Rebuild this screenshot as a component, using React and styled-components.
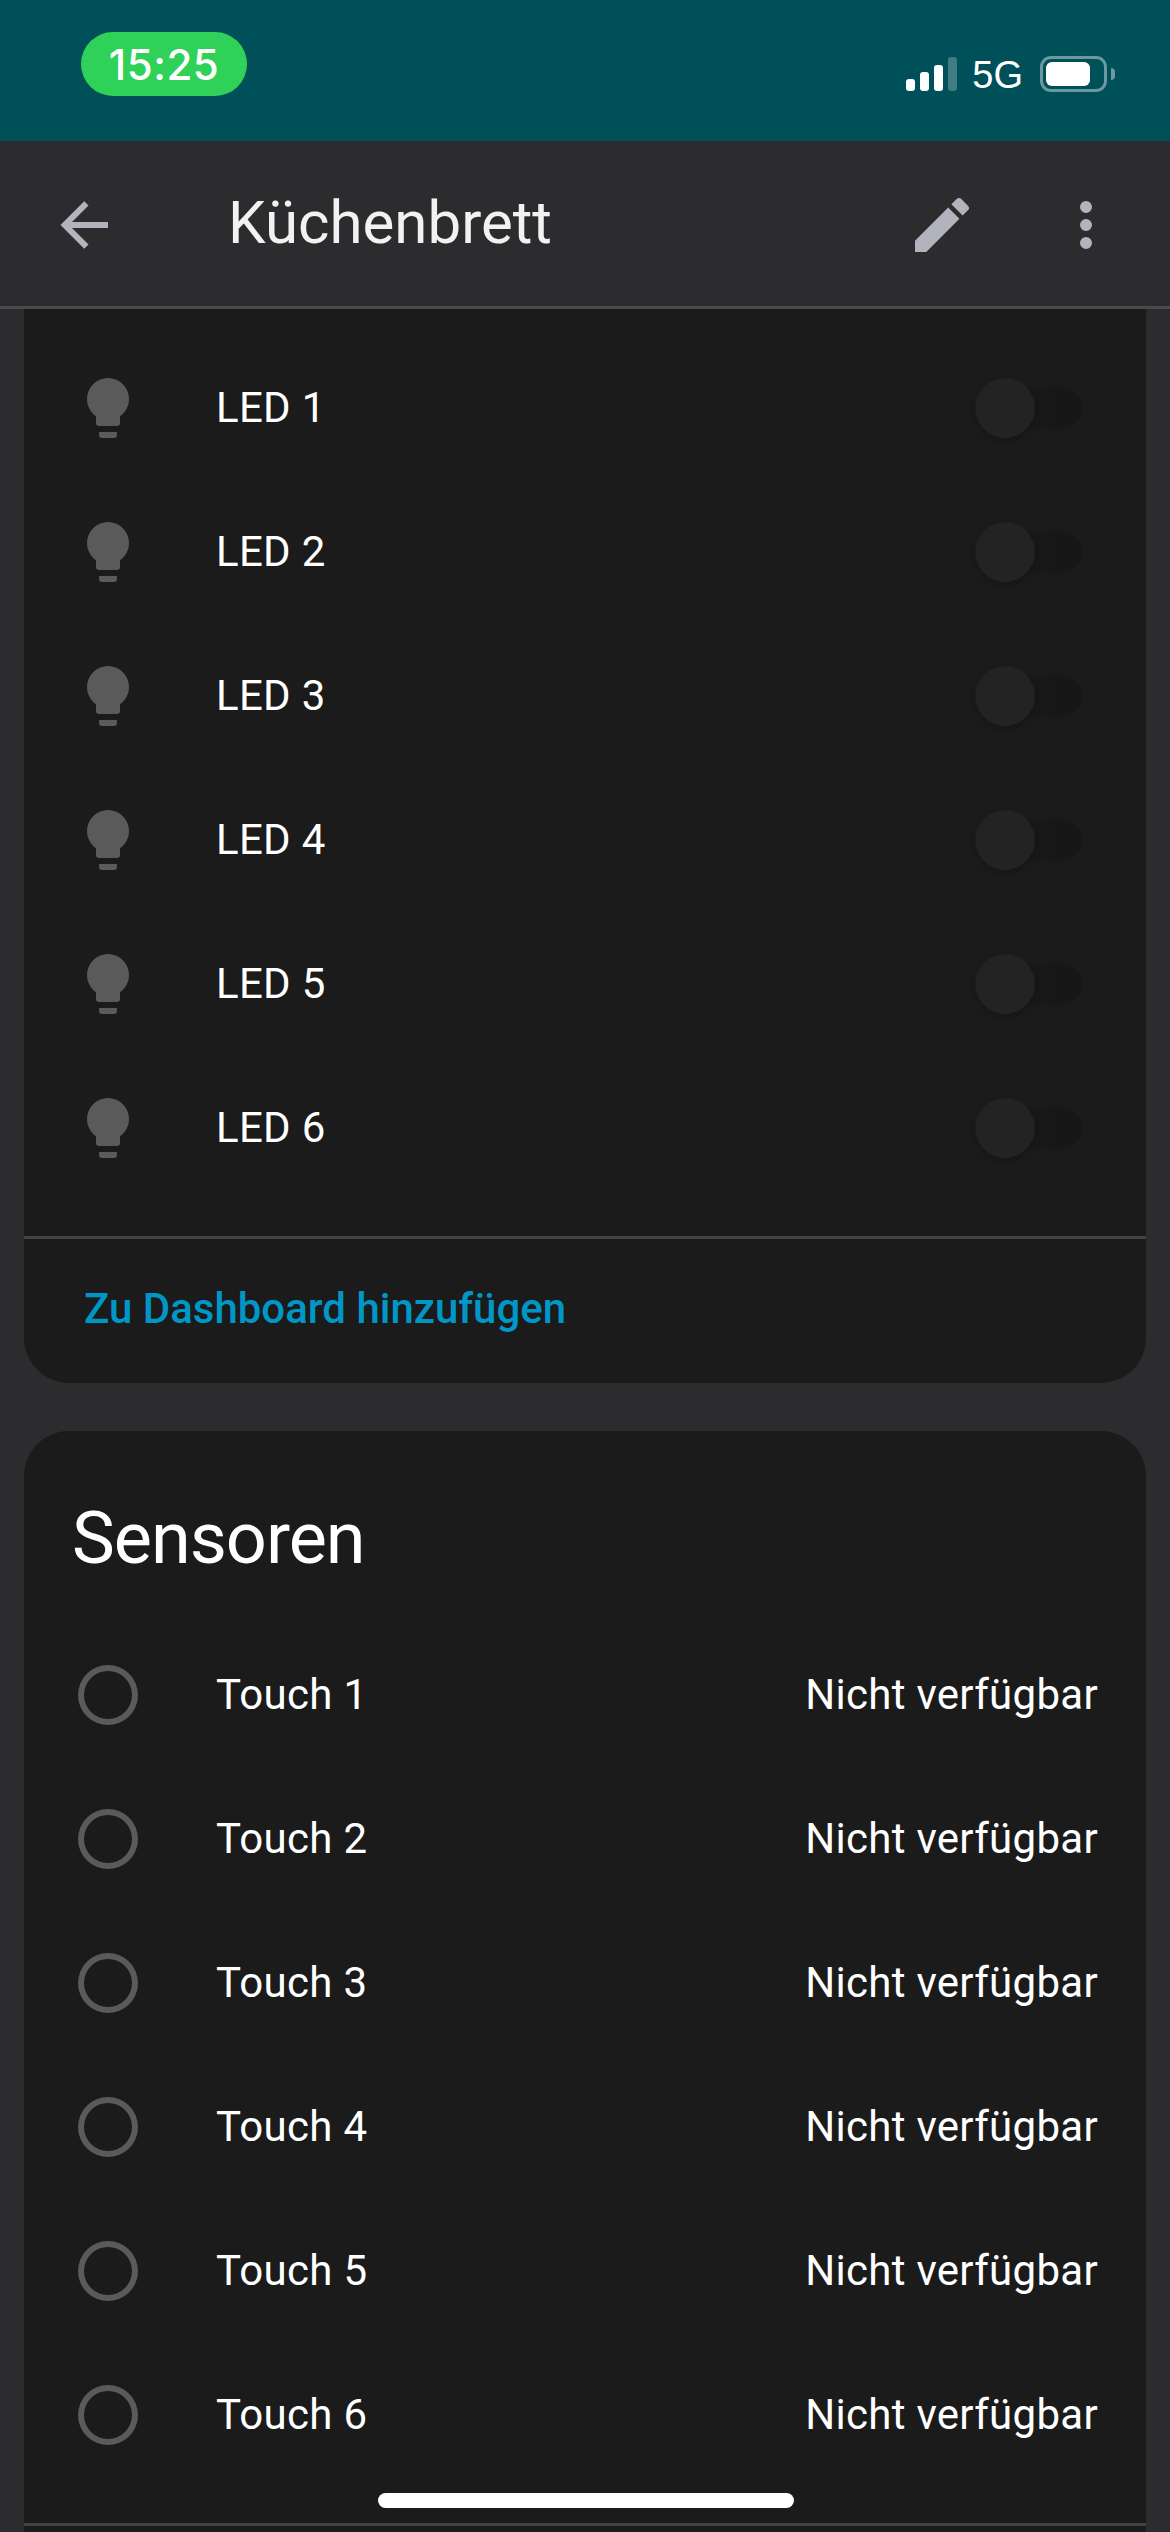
import React from 'react';
import styled, { createGlobalStyle } from 'styled-components';

const GlobalStyle = createGlobalStyle`
    html, body {
        margin: 0;
        padding: 0;
        background: #2c2c2e;
    }
`;

const Page = styled.div`
    position: relative;
    display: flex;
    flex-direction: column;
    width: 1170px;
    height: 2532px;
    overflow: hidden;
    background: #2c2c2e;
    font-family: Roboto, "Liberation Sans", sans-serif;
    color: #fff;
`;

const StatusBar = styled.div`
    display: flex;
    justify-content: space-between;
    align-items: flex-start;
    flex: none;
    box-sizing: border-box;
    height: 141px;
    padding: 32px 63px 0 81px;
    background: #00505a;
`;

const TimePill = styled.div`
    display: flex;
    align-items: center;
    justify-content: center;
    width: 166px;
    height: 64px;
    border-radius: 32px;
    background: #30d158;
    font-family: Inter, "Liberation Sans", sans-serif;
    font-size: 42px;
    font-weight: 500;
    letter-spacing: 0.5px;
`;

const StatusIcons = styled.div`
    display: flex;
    align-items: center;
    height: 36px;
    margin-top: 24px;
`;

const Signal = styled.div`
    display: flex;
    align-items: flex-end;
    gap: 5px;
    height: 34px;
`;

const SignalBar = styled.div`
    width: 9px;
    height: ${props => props.$h}px;
    border-radius: 3px;
    background: ${props => (props.$off ? 'rgba(255, 255, 255, 0.25)' : '#fff')};
`;

const Network = styled.div`
    margin: 2px 17px 0 15px;
    font-family: "Liberation Sans", sans-serif;
    font-size: 38px;
    line-height: 36px;
`;

const Battery = styled.div`
    position: relative;
    box-sizing: border-box;
    width: 67px;
    height: 36px;
    padding: 3px;
    border: 3px solid rgba(255, 255, 255, 0.42);
    border-radius: 11px;

    &::after {
        content: '';
        position: absolute;
        top: 9px;
        right: -11px;
        width: 4px;
        height: 12px;
        border-radius: 0 6px 6px 0;
        background: rgba(255, 255, 255, 0.42);
    }
`;

const BatteryFill = styled.div`
    width: 44px;
    height: 24px;
    border-radius: 6px;
    background: #fff;
`;

const Header = styled.header`
    display: flex;
    align-items: center;
    flex: none;
    box-sizing: border-box;
    height: 168px;
    padding: 3px 48px 0;
    border-bottom: 3px solid #4a4a4c;
    background: #2c2c2e;
`;

const HeaderButton = styled.div`
    display: flex;
    flex: none;
    width: 72px;
    height: 72px;
    margin-left: ${props => props.$gap || 0}px;
`;

const Title = styled.h1`
    flex: 1;
    margin: 0 0 5px 108px;
    font-size: 60px;
    font-weight: 400;
    color: #f2f2f2;
`;

const Icon = styled.svg`
    display: block;
    width: 72px;
    height: 72px;
    fill: ${props => props.$color};
`;

const Content = styled.main`
    display: flex;
    flex-direction: column;
    flex: 1;
    gap: 48px;
    padding: 0 24px;
`;

const Card = styled.section`
    flex: ${props => (props.$grow ? 1 : 'none')};
    padding-top: ${props => (props.$scrolled ? 27 : 0)}px;
    background: #1b1b1b;
    border-radius: ${props => (props.$scrolled ? '0 0 45px 45px' : '45px 45px 0 0')};
`;

const CardTitle = styled.h2`
    height: 92px;
    margin: 0;
    padding: 62px 48px 38px;
    font-size: 72px;
    font-weight: 400;
    line-height: 92px;
    letter-spacing: -1px;
`;

const RowList = styled.div`
    display: flex;
    flex-direction: column;
    padding-bottom: 36px;
    border-bottom: 3px solid #424242;
`;

const Row = styled.div`
    display: flex;
    align-items: center;
    height: 144px;
    padding: 0 48px;
`;

const RowName = styled.div`
    flex: 1;
    margin: 0 0 2px 72px;
    font-size: 42px;
    letter-spacing: 0.3px;
`;

const RowState = styled.div`
    margin-bottom: 2px;
    font-size: 42px;
    letter-spacing: 0.3px;
`;

const Toggle = styled.div`
    position: relative;
    width: 102px;
    height: 42px;
    margin-right: 15px;
    border-radius: 21px;
    background: linear-gradient(90deg, #181818 0 68%, #171717 68% 100%);
`;

const ToggleThumb = styled.div`
    position: absolute;
    top: -9px;
    left: -6px;
    width: 60px;
    height: 60px;
    border-radius: 50%;
    background: #232323;
    box-shadow: 0 3px 6px rgba(0, 0, 0, 0.2);
`;

const CardLink = styled.div`
    height: 144px;
    padding-left: 60px;
    font-size: 42px;
    font-weight: 500;
    line-height: 140px;
    color: #0097c7;
`;

const HomeBar = styled.div`
    position: absolute;
    left: 378px;
    top: 2493px;
    width: 416px;
    height: 15px;
    border-radius: 8px;
    background: #fff;
`;

const ICONS = {
    back: 'M20,11V13H8L13.5,18.5L12.08,19.92L4.16,12L12.08,4.08L13.5,5.5L8,11H20Z',
    pencil: 'M20.71,7.04C21.1,6.65 21.1,6 20.71,5.63L18.37,3.29C18,2.9 17.35,2.9 16.96,3.29L15.12,5.12L18.87,8.87M3,17.25V21H6.75L17.81,9.93L14.06,6.18L3,17.25Z',
    dots: 'M12,16A2,2 0 0,1 14,18A2,2 0 0,1 12,20A2,2 0 0,1 10,18A2,2 0 0,1 12,16M12,10A2,2 0 0,1 14,12A2,2 0 0,1 12,14A2,2 0 0,1 10,12A2,2 0 0,1 12,10M12,4A2,2 0 0,1 14,6A2,2 0 0,1 12,8A2,2 0 0,1 10,6A2,2 0 0,1 12,4Z',
    bulb: 'M12,2A7,7 0 0,0 5,9C5,11.38 6.19,13.47 8,14.74V17A1,1 0 0,0 9,18H15A1,1 0 0,0 16,17V14.74C17.81,13.47 19,11.38 19,9A7,7 0 0,0 12,2M9,21A1,1 0 0,0 10,22H14A1,1 0 0,0 15,21V20H9V21Z',
    circle: 'M12,20A8,8 0 0,1 4,12A8,8 0 0,1 12,4A8,8 0 0,1 20,12A8,8 0 0,1 12,20M12,2A10,10 0 0,0 2,12A10,10 0 0,0 12,22A10,10 0 0,0 22,12A10,10 0 0,0 12,2Z'
};

const MdiIcon = ({ name, color }) => (
    <Icon viewBox="0 0 24 24" $color={color}>
        <path d={ICONS[name]} />
    </Icon>
);

const NUMBERS = [1, 2, 3, 4, 5, 6];

export default function App() {
    return (
        <Page>
            <GlobalStyle />
            <StatusBar>
                <TimePill>15:25</TimePill>
                <StatusIcons>
                    <Signal>
                        <SignalBar $h={12} />
                        <SignalBar $h={19} />
                        <SignalBar $h={26} />
                        <SignalBar $h={34} $off />
                    </Signal>
                    <Network>5G</Network>
                    <Battery>
                        <BatteryFill />
                    </Battery>
                </StatusIcons>
            </StatusBar>
            <Header>
                <HeaderButton>
                    <MdiIcon name="back" color="#b3b3bd" />
                </HeaderButton>
                <Title>Küchenbrett</Title>
                <HeaderButton>
                    <MdiIcon name="pencil" color="#b3b3bd" />
                </HeaderButton>
                <HeaderButton $gap={72}>
                    <MdiIcon name="dots" color="#b3b3bd" />
                </HeaderButton>
            </Header>
            <Content>
                <Card $scrolled>
                    <RowList>
                        {NUMBERS.map(n => (
                            <Row key={n}>
                                <MdiIcon name="bulb" color="#5a5a5a" />
                                <RowName>LED {n}</RowName>
                                <Toggle>
                                    <ToggleThumb />
                                </Toggle>
                            </Row>
                        ))}
                    </RowList>
                    <CardLink>Zu Dashboard hinzufügen</CardLink>
                </Card>
                <Card $grow>
                    <CardTitle>Sensoren</CardTitle>
                    <RowList>
                        {NUMBERS.map(n => (
                            <Row key={n}>
                                <MdiIcon name="circle" color="#5a5a5a" />
                                <RowName>Touch {n}</RowName>
                                <RowState>Nicht verfügbar</RowState>
                            </Row>
                        ))}
                    </RowList>
                </Card>
            </Content>
            <HomeBar />
        </Page>
    );
}
